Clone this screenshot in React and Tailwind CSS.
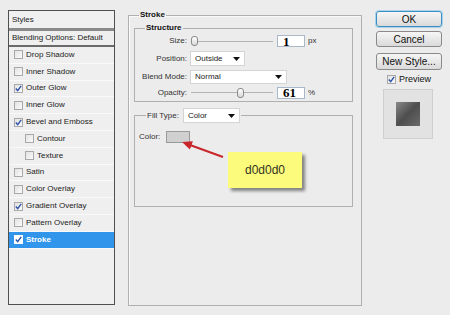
import React from 'react';

const items = [
  { label: 'Drop Shadow' },
  { label: 'Inner Shadow' },
  { label: 'Outer Glow', checked: true },
  { label: 'Inner Glow' },
  { label: 'Bevel and Emboss', checked: true },
  { label: 'Contour', indent: true },
  { label: 'Texture', indent: true },
  { label: 'Satin' },
  { label: 'Color Overlay' },
  { label: 'Gradient Overlay', checked: true },
  { label: 'Pattern Overlay' },
  { label: 'Stroke', checked: true, active: true },
];

const Check = ({ checked, active }) => (
  <span
    className={`w-[9px] h-[9px] shrink-0 border flex items-center justify-center ${
      active ? 'border-white bg-white' : 'border-[#a9a9a9] bg-gradient-to-br from-[#e2e2e2] to-[#fbfbfb]'
    }`}
  >
    {checked && (
      <svg width="7" height="7" viewBox="0 0 7 7">
        <path d="M0.8 3.6 L2.7 5.6 L6.2 0.8" fill="none" stroke="#2d54a8" strokeWidth="1.4" />
      </svg>
    )}
  </span>
);

const StyleRow = ({ label, checked, indent, active }) => (
  <div
    className={`h-[16.8px] flex items-center gap-[3px] border-b border-[#f9f9f9] ${indent ? 'pl-[16px]' : 'pl-[5px]'} ${
      active ? 'bg-[#3195ec] text-white font-bold' : 'text-[#222]'
    }`}
  >
    <Check checked={checked} active={active} />
    <span>{label}</span>
  </div>
);

const Slider = ({ pos }) => (
  <div className="relative w-[82px] h-[12px] ml-[1px] flex items-center">
    <div className="w-full h-[1px] bg-[#b4b4b4]" />
    <div
      className="absolute top-[1px] w-[7px] h-[10px] rounded-[3px] border border-[#8a8a8a] bg-gradient-to-b from-white to-[#d8d8d8]"
      style={{ left: pos }}
    />
  </div>
);

const NumBox = ({ value, unit }) => (
  <div className="flex items-center ml-[4px]">
    <div className="w-[28px] h-[12px] bg-white border border-[#a9b8c9] flex items-center pl-[5px] font-['Liberation_Serif',serif] font-bold text-[13px] leading-none text-black">
      {value}
    </div>
    <span className="ml-[3px] text-[8px] text-[#333]">{unit}</span>
  </div>
);

const Select = ({ value, w, h }) => (
  <div
    className={`${w} ${h} bg-white border border-[#d4d4d4] flex items-center justify-between pl-[4px] pr-[4px] text-[8px] text-[#222]`}
  >
    <span>{value}</span>
    <svg width="7" height="4" viewBox="0 0 7 4">
      <path d="M0 0 H7 L3.5 4 Z" fill="#111" />
    </svg>
  </div>
);

const Row = ({ label, children, className = '' }) => (
  <div className={`flex items-center ${className}`}>
    <span className="w-[55px] pr-[3px] text-right text-[8px] text-[#333]">{label}</span>
    {children}
  </div>
);

const Button = ({ children, primary, className = '' }) => (
  <div
    className={`w-[66px] rounded-[3px] border flex items-center justify-center text-[10px] text-[#111] bg-gradient-to-b from-[#f6f6f6] to-[#dadada] ${
      primary ? 'border-[#3c8fc0] shadow-[0_0_0_1px_#a9d3ec]' : 'border-[#8a8a8a]'
    } ${className}`}
  >
    {children}
  </div>
);

export default function App() {
  return (
    <div className="relative w-[450px] h-[315px] bg-[#ececec] flex pt-[10px] pl-[8px] font-['Liberation_Sans',Arial,sans-serif] overflow-hidden">
      {/* styles list */}
      <div className="w-[107px] h-[295px] border border-[#505050] bg-[#efefef] flex flex-col text-[8px]">
        <div className="h-[17px] flex items-center pl-[3px] text-[#222] bg-[#f0f0f0]">Styles</div>
        <div className="h-[3px] bg-[#8a8a8a]" />
        <div className="h-[16px] flex items-center pl-[3px] text-[#222] border-b-2 border-[#6a6a6a]">
          Blending Options: Default
        </div>
        {items.map((it) => (
          <StyleRow key={it.label} {...it} />
        ))}
      </div>

      {/* main group */}
      <fieldset className="ml-[13px] w-[234px] h-[296px] border border-[#b0b0b0] shadow-[inset_1px_1px_0_#fafafa] pl-[5px] pr-[8px]">
        <legend className="ml-[5px] px-[1px] text-[8px] leading-[10px] font-bold text-[#111]">Stroke</legend>

        <fieldset className="border border-[#b0b0b0] h-[79px] mt-[3px]">
          <legend className="ml-[10px] px-[1px] text-[8px] leading-[10px] font-bold text-[#111]">Structure</legend>
          <Row label="Size:" className="mt-[2px] h-[12px]">
            <Slider pos="0px" />
            <NumBox value="1" unit="px" />
          </Row>
          <Row label="Position:" className="mt-[4px] h-[15px]">
            <Select value="Outside" w="w-[55px]" h="h-[15px]" />
          </Row>
          <Row label="Blend Mode:" className="mt-[4px] h-[14px]">
            <Select value="Normal" w="w-[97px]" h="h-[14px]" />
          </Row>
          <Row label="Opacity:" className="mt-[2px] h-[13px]">
            <Slider pos="46px" />
            <NumBox value="61" unit="%" />
          </Row>
        </fieldset>

        <fieldset className="mt-[6px] border border-[#b0b0b0] h-[99px]">
          <legend className="ml-[11px] px-[1px] flex items-center gap-[4px] text-[8px] text-[#333]">
            <span>Fill Type:</span>
            <Select value="Color" w="w-[57px]" h="h-[15px]" />
          </legend>
          <div className="flex items-center mt-[8px] pl-[4px] text-[8px] text-[#333]">
            <span className="w-[27px]">Color:</span>
            <span className="w-[24px] h-[12px] bg-[#d0d0d0] border border-[#9a9a9a]" />
          </div>
        </fieldset>
      </fieldset>

      {/* buttons */}
      <div className="ml-[14px] w-[66px] flex flex-col">
        <Button primary className="mt-[1px] h-[16px]">OK</Button>
        <Button className="mt-[4px] h-[16px]">Cancel</Button>
        <Button className="mt-[6px] h-[17px]">New Style...</Button>
        <div className="mt-[4px] h-[11px] flex items-center gap-[3px] pl-[11px] text-[9px] text-[#111]">
          <Check checked />
          <span>Preview</span>
        </div>
        <div className="mt-[4px] ml-[7px] w-[50px] h-[50px] border border-[#cfcfcf] bg-[#e2e2e2] flex items-center justify-center">
          <div className="w-[24px] h-[24px] bg-gradient-to-br from-[#8a8a8a] via-[#4e4e4e] to-[#6a6a6a]" />
        </div>
      </div>

      {/* annotation */}
      <svg className="absolute left-0 top-0 pointer-events-none" width="450" height="315">
        <line x1="223" y1="157" x2="190" y2="145" stroke="#c8262a" strokeWidth="2" />
        <path d="M182 142 L192.9 141.2 L189.9 149.6 Z" fill="#c8262a" />
      </svg>
      <div className="absolute left-[228px] top-[152px] w-[74px] h-[36px] bg-[#fcfb7c] shadow-[3px_3px_3px_rgba(0,0,0,0.45)] flex items-center justify-center text-[12px] text-[#333322]">
        d0d0d0
      </div>
    </div>
  );
}
